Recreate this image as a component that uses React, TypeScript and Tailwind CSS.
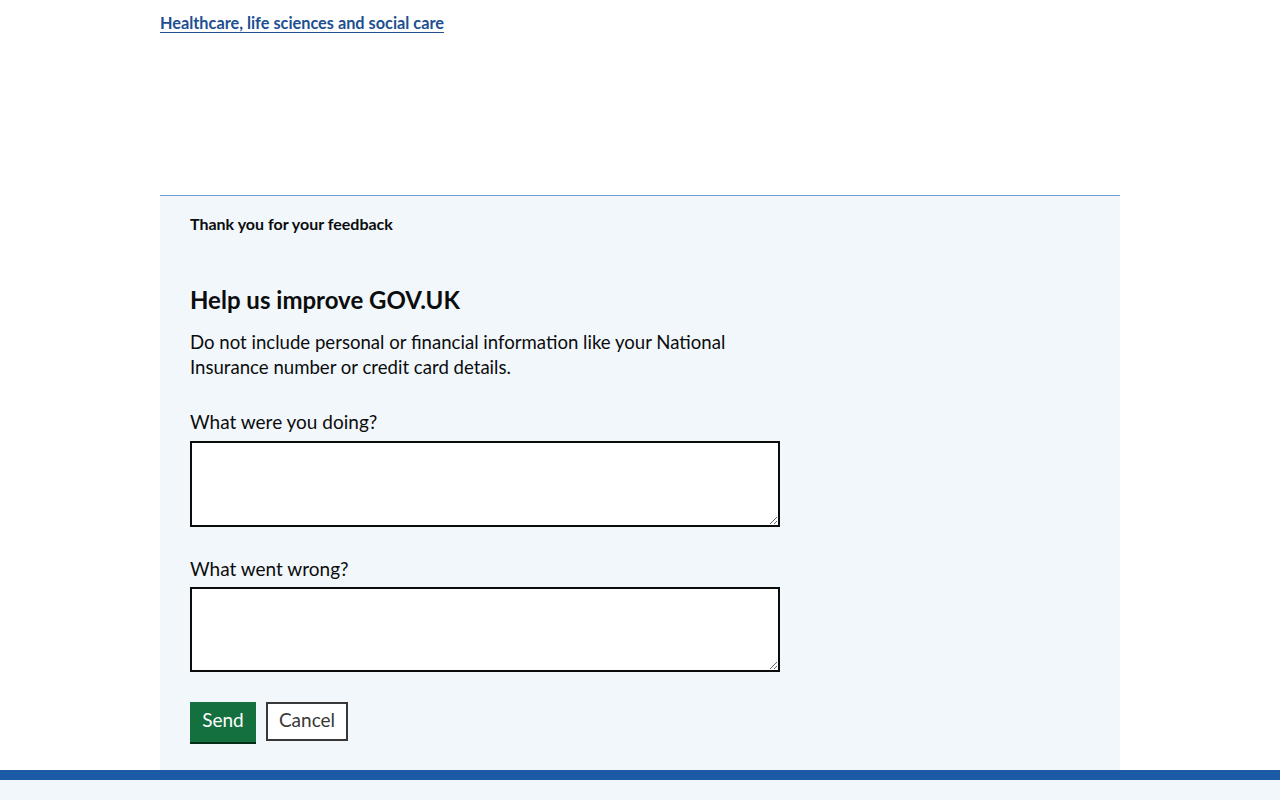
import React from "react";

export default function App() {
  return (
    <div className="min-h-[800px] bg-white text-[#0b0c0c]" style={{ fontFamily: 'Lato, Arial, sans-serif' }}>
      <div className="mx-auto w-[960px]">
        <div className="pt-[11px] h-[195px]">
          <a href="#" className="text-[16.3px] font-bold leading-[22px] text-[#1d4f91] underline underline-offset-[3px] decoration-[1px]">
            Healthcare, life sciences and social care
          </a>
        </div>
        <div className="border-t border-[#6f9fd0] bg-[#f2f7fc] px-[30px] pt-[17px] pb-[28px]">
          <p className="text-[16px] font-bold leading-[22px]">Thank you for your feedback</p>
          <h2 className="mt-[50px] text-[24px] font-bold leading-[30px]">Help us improve GOV.UK</h2>
          <p className="mt-[15px] w-[590px] text-[18.6px] leading-[25px]">
            Do not include personal or financial information like your National Insurance number or credit card details.
          </p>
          <label className="mt-[29px] block text-[19px] leading-[25px]">What were you doing?</label>
          <textarea className="mt-[7px] block h-[86px] w-[590px] border-2 border-[#0b0c0c] bg-white" />
          <label className="mt-[29px] block text-[19px] leading-[25px]">What went wrong?</label>
          <textarea className="mt-[6px] block h-[85px] w-[590px] border-2 border-[#0b0c0c] bg-white" />
          <div className="mt-[30px] flex gap-[10px]">
            <button className="h-[40px] w-[66px] bg-[#15703f] pb-[3px] text-[19px] text-white shadow-[0_2px_0_#002d18]">Send</button>
            <button className="h-[39px] w-[82px] border-2 border-[#383838] bg-white pb-[2px] text-[19px] text-[#383838]">Cancel</button>
          </div>
        </div>
      </div>
      <div className="h-[10px] bg-[#1d5aa5]" />
      <div className="h-[20px] bg-[#f2f7fc]" />
    </div>
  );
}
